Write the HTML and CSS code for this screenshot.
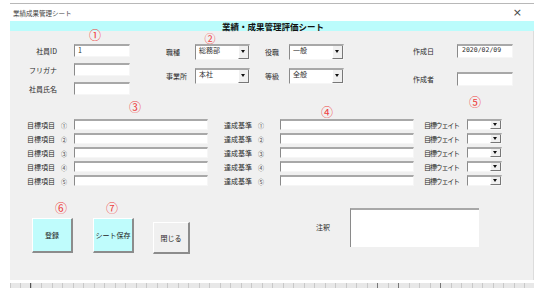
FILE: index.html
```html
<!DOCTYPE html>
<html lang="ja">
<head>
    <meta charset="UTF-8">
    <title>業績成果管理シート</title>
    <link rel="stylesheet" href="styles.css">
</head>
<body>
    <div class="window">
        <!-- title bar -->
        <div class="titlebar">
            <span class="caption">業績成果管理シート</span>
            <span class="close">×</span>
        </div>
        <div class="banner">業績・成果管理評価シート</div>

        <div class="panel">
            <!-- header fields -->
            <div class="top">
                <div class="col col-a">
                    <label>社員ID</label><div class="field">1</div>
                    <label>フリガナ</label><div class="field"></div>
                    <label>社員氏名</label><div class="field"></div>
                </div>
                <div class="col col-b">
                    <label>職種</label><div class="combo"><span>総務部</span><i class="arrow"></i></div>
                    <label>事業所</label><div class="combo"><span>本社</span><i class="arrow"></i></div>
                </div>
                <div class="col col-c">
                    <label>役職</label><div class="combo"><span>一般</span><i class="arrow"></i></div>
                    <label>等級</label><div class="combo"><span>全般</span><i class="arrow"></i></div>
                </div>
                <div class="col col-d">
                    <label>作成日</label><div class="field date">2020/02/09</div>
                    <label>作成者</label><div class="field"></div>
                </div>
            </div>

            <!-- goal rows -->
            <div class="goals">
                <label>目標項目<b>①</b></label><div class="field"></div>
                <label>達成基準<b>①</b></label><div class="field"></div>
                <label class="weight">目標ウェイト</label><div class="combo"><span></span><i class="arrow"></i></div>

                <label>目標項目<b>②</b></label><div class="field"></div>
                <label>達成基準<b>②</b></label><div class="field"></div>
                <label class="weight">目標ウェイト</label><div class="combo"><span></span><i class="arrow"></i></div>

                <label>目標項目<b>③</b></label><div class="field"></div>
                <label>達成基準<b>③</b></label><div class="field"></div>
                <label class="weight">目標ウェイト</label><div class="combo"><span></span><i class="arrow"></i></div>

                <label>目標項目<b>④</b></label><div class="field"></div>
                <label>達成基準<b>④</b></label><div class="field"></div>
                <label class="weight">目標ウェイト</label><div class="combo"><span></span><i class="arrow"></i></div>

                <label>目標項目<b>⑤</b></label><div class="field"></div>
                <label>達成基準<b>⑤</b></label><div class="field"></div>
                <label class="weight">目標ウェイト</label><div class="combo"><span></span><i class="arrow"></i></div>
            </div>

            <!-- buttons and note -->
            <div class="bottom">
                <button class="btn btn-cyan">登録</button>
                <button class="btn btn-cyan btn-save">シート保存</button>
                <button class="btn btn-close">閉じる</button>
                <label class="note-label">注釈</label>
                <div class="note"></div>
            </div>
        </div>

        <div class="ruler"></div>

        <!-- red annotation markers -->
        <span class="mark m1">①</span>
        <span class="mark m2">②</span>
        <span class="mark m3">③</span>
        <span class="mark m4">④</span>
        <span class="mark m5">⑤</span>
        <span class="mark m6">⑥</span>
        <span class="mark m7">⑦</span>
    </div>
</body>
</html>
```

FILE: styles.css
```css
body {
    margin: 0;
    background: #ffffff;
    font-family: "Noto Sans CJK JP", "Noto Sans", sans-serif;
    color: #333;
}

.window {
    position: relative;
    width: 524px;
    margin: 3px 0 0 10px;
    border-top: 1px solid #b8b8b8;
}

.titlebar {
    display: flex;
    justify-content: space-between;
    align-items: center;
    height: 17px;
    padding: 0 12px 0 3px;
}

.caption {
    font-size: 6.5px;
    color: #444;
}

.close {
    font-size: 11px;
    color: #444;
    font-family: "DejaVu Sans", sans-serif;
}

.banner {
    height: 10px;
    line-height: 10px;
    background: #bbfcfc;
    text-align: center;
    font-size: 8.5px;
    font-weight: bold;
    color: #111;
    padding-left: 2px;
}

.panel {
    height: 249px;
    background: #f0f0f0;
    border-right: 1px solid #dcdcdc;
    box-sizing: border-box;
}

label {
    font-size: 7px;
    color: #2a2a2a;
    white-space: nowrap;
}

/* sunken text box */
.field {
    background: #fff;
    border-top: 2px solid #a8a8a8;
    border-left: 1px solid #8a8a8a;
    border-right: 1px solid #f6f6f6;
    border-bottom: 1px solid #f6f6f6;
    box-sizing: border-box;
    font-size: 7px;
    line-height: 9px;
    padding-left: 3px;
}

.combo {
    display: flex;
    background: #fff;
    border-top: 2px solid #a8a8a8;
    border-left: 1px solid #8a8a8a;
    border-right: 1px solid #f6f6f6;
    border-bottom: 1px solid #f6f6f6;
    box-sizing: border-box;
}

.combo span {
    flex: 1;
    font-size: 7px;
    line-height: 9px;
    padding-left: 3px;
}

.arrow {
    position: relative;
    width: 9px;
    background: #f0f0f0;
    border-left: 1px solid #fff;
    border-right: 1px solid #777;
    border-bottom: 1px solid #777;
}

.arrow::after {
    content: "";
    position: absolute;
    left: 2px;
    bottom: 3px;
    border-left: 2.5px solid transparent;
    border-right: 2.5px solid transparent;
    border-top: 3px solid #111;
}

/* header block */
.top {
    display: flex;
    align-items: flex-start;
    height: 88px;
    padding-top: 13px;
    box-sizing: border-box;
}

.col {
    display: grid;
    align-items: center;
}

.col-a {
    grid-template-columns: 47px 56px;
    grid-auto-rows: 13px;
    column-gap: 17px;
    row-gap: 6px;
}

.col-a label {
    text-align: right;
}

.col-b {
    margin-left: 36px;
    grid-template-columns: 29px 55px;
    grid-auto-rows: 16px;
    row-gap: 8px;
}

.col-c {
    margin-left: 15px;
    grid-template-columns: 24px 55px;
    grid-auto-rows: 16px;
    row-gap: 8px;
}

.col-b .combo,
.col-c .combo {
    height: 16px;
}

.col-b .arrow::after,
.col-c .arrow::after {
    bottom: 5px;
}

.col-d {
    margin-left: 69px;
    grid-template-columns: 44px 56px;
    grid-auto-rows: 14px;
    row-gap: 14px;
}

.col .field {
    height: 100%;
}

.date {
    padding-left: 4px;
    font-family: "DejaVu Sans Mono", monospace;
    font-size: 6.5px;
}

/* goal rows */
.goals {
    display: grid;
    grid-template-columns: 47px 150px 56px 144px 43px 35px;
    grid-auto-rows: 11px;
    row-gap: 3px;
    align-items: center;
    padding-left: 17px;
}

.goals label b {
    font-weight: normal;
    font-size: 6px;
    margin-left: 6px;
    color: #444;
}

.goals .weight {
    letter-spacing: -1.2px;
}

.goals .field {
    width: 134px;
    height: 11px;
}

.goals .combo {
    height: 11px;
}

.goals .arrow::after {
    bottom: 2px;
}

/* bottom row */
.bottom {
    display: flex;
    align-items: flex-start;
    margin-top: 22px;
    padding-left: 22px;
}

.btn {
    margin: 10px 0 0;
    padding: 0;
    width: 41px;
    height: 35px;
    font-family: inherit;
    font-size: 7px;
    color: #222;
    border: none;
    border-top: 1px solid #fff;
    border-left: 1px solid #fff;
    border-right: 2px solid #8c8c8c;
    border-bottom: 2px solid #8c8c8c;
}

.btn-cyan {
    background: #bffcfc;
}

.btn-save {
    margin-left: 20px;
}

.btn-close {
    margin: 14px 0 0 19px;
    width: 37px;
    height: 32px;
    background: #f0f0f0;
}

.note-label {
    width: 34px;
    height: 39px;
    line-height: 39px;
    margin-left: 126px;
}

.note {
    width: 129px;
    height: 39px;
    background: #fff;
    border-top: 2px solid #a8a8a8;
    border-left: 1px solid #8a8a8a;
    box-sizing: border-box;
}

.ruler {
    height: 5px;
    margin-top: 3px;
    background-color: #e8e8e8;
    background-image:
        linear-gradient(90deg, transparent 20px, #555 20px 21px, transparent 21px),
        linear-gradient(90deg, transparent 367px, #777 367px 368px, transparent 368px),
        linear-gradient(90deg, transparent 388px, #777 388px 389px, transparent 389px),
        linear-gradient(90deg, transparent 430px, #777 430px 431px, transparent 431px),
        repeating-linear-gradient(90deg, #c9c9c9 0 1px, transparent 1px 10.5px);
}

/* red circled annotation numbers */
.mark {
    position: absolute;
    transform: translate(-50%, -50%);
    font-size: 12px;
    line-height: 12px;
    color: #ee4040;
}

.m1 { left: 85px; top: 31px; }
.m2 { left: 200px; top: 34px; font-size: 11px; line-height: 11px; }
.m3 { left: 125px; top: 103px; }
.m4 { left: 317px; top: 108px; }
.m5 { left: 465px; top: 98px; }
.m6 { left: 51px; top: 204px; }
.m7 { left: 102px; top: 204px; }
```
